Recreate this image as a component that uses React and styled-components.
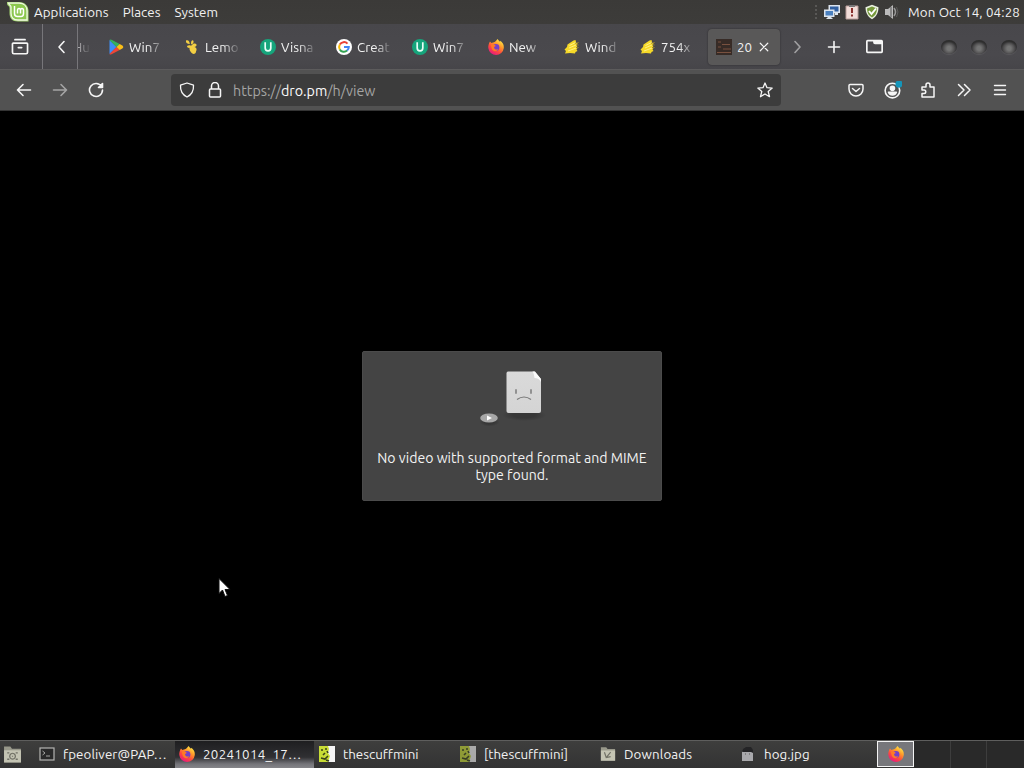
import styled, { createGlobalStyle, css } from "styled-components"

const GlobalStyle = createGlobalStyle`
  * {
    box-sizing: border-box;
  }
  body {
    margin: 0;
    overflow: hidden;
    background: #000;
    font-family: Ubuntu, "Noto Sans", "Open Sans", sans-serif;
    font-size: 13.333px;
    color: #f2f2f2;
  }
  svg {
    display: block;
    flex: none;
  }
`

const Desktop = styled.div`
  position: relative;
  width: 1024px;
  height: 768px;
  display: flex;
  flex-direction: column;
  background: #000;
`

const Text = styled.span`
  display: block;
  padding-top: 2px;
  white-space: nowrap;
  line-height: 18px;
  letter-spacing: ${(p) => p.$ls || 0}px;
`

/* top panel */
const Panel = styled.header`
  height: 24px;
  display: flex;
  align-items: center;
  padding: 0 4px 0 7px;
  background: linear-gradient(#3b3a38, #3d3c3a);
`
const Menu = styled.nav`
  display: flex;
  gap: 14px;
  margin-left: 5px;
  flex: 1;
`
const Tray = styled.div`
  display: flex;
  align-items: center;
  gap: 4px;
  margin-right: 8px;
`

/* tab strip */
const TabBar = styled.div`
  height: 45px;
  display: flex;
  align-items: center;
  background: linear-gradient(#48474b, #4a494d 70%, #464549);
`
const Cell = styled.div`
  width: ${(p) => p.$w}px;
  height: 100%;
  display: flex;
  align-items: center;
  justify-content: center;
  padding-left: ${(p) => p.$pad || 0}px;
  padding-right: ${(p) => p.$padR || 0}px;
  border-right: ${(p) => (p.$line ? "1px solid #77767a" : "none")};
  opacity: ${(p) => (p.$dim ? 0.5 : 1)};
`
const Clipped = styled.div`
  width: 22px;
  overflow: hidden;
  color: #b0afb3;
  text-indent: -5px;
  mask-image: linear-gradient(90deg, #000, transparent 60%);
`
const Tab = styled.div`
  width: 76px;
  height: 36px;
  display: flex;
  align-items: center;
  gap: 5px;
  padding-left: 8px;
  ${(p) =>
    p.$active &&
    css`
      width: 72px;
      background: #595858;
      border-radius: 4px;
      box-shadow: 0 0 2px rgba(0, 0, 0, 0.45);
    `}
`
const TabTitle = styled(Text)`
  width: ${(p) => p.$w || 36}px;
  overflow: hidden;
  mask-image: ${(p) =>
    p.$w ? "none" : "linear-gradient(90deg, #000 50%, transparent 100%)"};
`
const WindowButtons = styled.div`
  display: flex;
  gap: 14px;
  margin-left: auto;
  margin-right: 7px;
`
const Dot = styled.i`
  width: 16px;
  height: 14px;
  border-radius: 50%;
  background: radial-gradient(circle at 50% 60%, #747474 0 2px, #555455 5px, #403f41 7px);
  box-shadow: inset 0 2px 2px #2c2c2c, 0 1px 1px #5a595c;
`

/* navigation */
const NavBar = styled.div`
  height: 42px;
  display: flex;
  align-items: center;
  background: #525252;
  border-top: 1px solid #5c5b5c;
  border-bottom: 1px solid #343434;
`
const UrlBar = styled.div`
  width: 610px;
  height: 32px;
  margin-left: 51px;
  padding: 0 8px;
  display: flex;
  align-items: center;
  background: #3c3c3c;
  border-radius: 4px;
`
const Url = styled(Text)`
  flex: 1;
  margin-left: -2px;
  font-size: 14.300px;
  color: #a5a5a4;
  b {
    font-weight: 400;
    color: #fbfbfb;
  }
`

/* page */
const Page = styled.main`
  flex: 1;
  display: flex;
  align-items: center;
  justify-content: center;
`
const ErrorBox = styled.div`
  width: 300px;
  height: 150px;
  display: flex;
  flex-direction: column;
  align-items: center;
  background: #444;
  border: 1px solid #4b4b4b;
  border-radius: 2px;
`
const Message = styled.p`
  margin: 24px 0 0;
  width: 290px;
  text-align: center;
  font-size: 14.100px;
  line-height: 17px;
`

/* bottom panel */
const TaskBar = styled.footer`
  height: 28px;
  display: flex;
  background: linear-gradient(#3e3e3d, #333);
  border-top: 1px solid #5e5e5d;
`
const Task = styled.div`
  flex: none;
  width: ${(p) => p.$w}px;
  height: 100%;
  display: flex;
  align-items: center;
  gap: ${(p) => p.$gap || 8}px;
  padding-left: ${(p) => p.$pad || 4}px;
  padding-bottom: 1px;
  background: ${(p) =>
    p.$active ? "linear-gradient(#1e1e20, #303033 60%, #747479 85%, #858589)" : "none"};
  svg {
    opacity: ${(p) => (p.$dim ? 0.6 : 1)};
  }
`
const Workspace = styled.div`
  flex: 0 1 37px;
  height: 27px;
  display: flex;
  align-items: center;
  justify-content: center;
  background: #292929;
  border-right: 1px solid #3d3d3d;
  &:last-child {
    border-right: none;
  }
  ${(p) =>
    p.$active &&
    css`
      flex: none;
      width: 37px;
      background: #77777b;
      border: 1px solid #f4f4f4;
      height: 26px;
    `}
`
const Pointer = styled.svg`
  position: absolute;
  left: 218px;
  top: 578px;
`

const Line = ({ s = 16, d, w = 1.4, children }) => (
  <svg
    width={s}
    height={s}
    viewBox="0 0 16 16"
    fill="none"
    stroke="#f6f6f6"
    strokeWidth={w}
    strokeLinecap="round"
    strokeLinejoin="round"
  >
    {d && <path d={d} />}
    {children}
  </svg>
)

const Mint = () => (
  <svg width="22" height="22" viewBox="0 0 22 22">
    <path d="M0 1h12c6 0 9.500 4 9.500 9v10.500H11C5 20.500 2.500 17 2.500 12V7C2.500 5 .5 5 0 3z" fill="#a5d672" />
    <path d="M1.500 2.200h10.500c5 0 8 3.300 8 7.800v9H11c-4.500 0-7-2.200-7-7V6C4 4 2 4 1.500 2.200z" fill="#8cc84f" stroke="#eff8e2" strokeWidth="1.300" />
    <path d="M7.500 5v7.500q0 3 3 3H14q2.500 0 2.500-3V9.500q0-2-1.500-2t-1.500 2v3M13.500 9.500q0-2-1.500-2t-1.500 2v3" fill="none" stroke="#fff" strokeWidth="1.500" />
  </svg>
)

const Firefox = () => (
  <svg width="16" height="16" viewBox="0 0 16 16">
    <defs>
      <linearGradient id="fx" x1="0.850" y1="0.050" x2="0.250" y2="1">
        <stop offset="0" stopColor="#fff14a" />
        <stop offset="0.350" stopColor="#ff9a2a" />
        <stop offset="0.650" stopColor="#ff4a3d" />
        <stop offset="1" stopColor="#e31587" />
      </linearGradient>
    </defs>
    <path d="M9.500 0c1 1 1.500 2 2.500 2.700l.5-.9C15 4 16 6 15.800 9A7.800 7.800 0 0 1 .3 9C0 6.500 1 4 2 2.500L3.300 4 5 3.500C6 3.500 8 2.500 9.500 0z" fill="url(#fx)" />
    <circle cx="8" cy="8.500" r="3.400" fill="#7440c9" />
    <path d="M3 5.500c2-.8 3.500 0 4.800 1.400L6 8c0 3 4 3.500 5 1-3 6-8 3-8-3.500z" fill="#ff7a26" />
  </svg>
)

const Play = () => (
  <svg width="16" height="16" viewBox="0 0 16 16">
    <path d="M1.500 1v14l7-7z" fill="#3f8df5" />
    <path d="M1.500 1q.5-1 2-.3L11.700 5 8.500 8z" fill="#35b15c" />
    <path d="M1.500 15q.5 1 2 .3L11.700 11 8.500 8z" fill="#ee4638" />
    <path d="M8.500 8l3.200-3 3 1.700q1.300 1.300 0 2.600l-3 1.700z" fill="#fbbf18" />
  </svg>
)

const Lemon = () => (
  <svg width="16" height="16" viewBox="0 0 16 16" fill="#f3cf43">
    <path d="M2 1.500c2-1 3.600.5 3.800 3.500-2.800 0-4.300-1.500-3.800-3.500zM7 4.500C7 1 9 .5 9.500 2 10 4 8.500 5 7.500 5.500zM3 7c2-1.500 4-.8 5 .5-1.500 2-5 2-5-.5z" />
    <path d="M8 6c2-2.500 5-1.500 4.500.5-.5 1.500-2 1.500-3 1.500 2.500 0 4 2 2.500 4.500 0 1.500-1 2.500-2.500 2.500C6.500 14 4.500 10 6 7.500z" />
  </svg>
)

const GreenU = () => (
  <svg width="16" height="16" viewBox="0 0 16 16">
    <circle cx="8" cy="8" r="8" fill="#16a57c" />
    <path d="M5.200 3.200V9a2.800 2.800 0 0 0 5.600 0V3.200" fill="none" stroke="#e9fff8" strokeWidth="1.700" />
  </svg>
)

const Google = () => (
  <svg width="16" height="16" viewBox="0 0 16 16" fill="none" strokeWidth="2">
    <circle cx="8" cy="8" r="8" fill="#fff" />
    <path d="M11.500 4.600A4.800 4.800 0 0 0 3.800 5.600" stroke="#e94235" />
    <path d="M3.800 5.600a4.800 4.800 0 0 0 0 4.800" stroke="#fabb05" />
    <path d="M3.800 10.400a4.800 4.800 0 0 0 7.300 1.200" stroke="#34a353" />
    <path d="M11.100 11.600A4.800 4.800 0 0 0 12.800 8H8" stroke="#4285f4" />
  </svg>
)

const Scribble = () => (
  <svg width="16" height="16" viewBox="0 0 16 16">
    <path d="M3.500 5.500L9.500 1.500l2-.5.5 2-1 1.500 2.500-.5-.5 3 .5 2-1 1.500 1 1.500-2 1-.5 1.500-5-.5-5 .5L2 12 .5 10.500 3 8z" fill="#f6d928" />
    <path d="M5.500 6.500l6-3M5 9l7-3M4 12l8-3" stroke="#fff083" fill="none" />
    <path d="M12 3.500h3M12 6h3M12 8.500h3" stroke="#857539" strokeWidth=".8" />
  </svg>
)

const Thumb = () => (
  <svg width="16" height="16" viewBox="0 0 16 16">
    <path d="M0 0h16v16H0z" fill="#372b26" />
    <path d="M2 3h3M6 5.500h8M2 8h3M7 10h8M1 13.500h14" stroke="#79513f" strokeWidth="1.200" />
  </svg>
)

const Terminal = () => (
  <svg width="16" height="16" viewBox="0 0 16 16">
    <rect x="1" y="2" width="14" height="12" fill="#292929" stroke="#b5b5b2" strokeWidth="1.200" />
    <path d="M3.500 5l2.500 2-2.500 2M7 10h4" fill="none" stroke="#a5a5a2" />
  </svg>
)

const Folder = ({ s = 19, arrow }) => (
  <svg width={s} height={s} viewBox="0 0 18 18">
    <path d="M1 1.500h6l1.500 2H17v13H1z" fill="#98988a" />
    <path d="M1 5h16v11.500H1z" fill="#c4c4b3" />
    {arrow ? (
      <path d="M5 7l2 6 5-1M7 13l5-6" fill="none" stroke="#717166" strokeWidth="1.300" />
    ) : (
      <path d="M4 7.500h2M4 13.500h2M12 7.500h2M12 13.500h2M9 8a2.700 2.700 0 1 0 .1 0M9 10.200v1" fill="none" stroke="#717166" strokeWidth="1.200" />
    )}
  </svg>
)

const Scuff = () => (
  <svg width="16" height="16" viewBox="0 0 16 16">
    <path d="M0 0h16v16H0z" fill="#f5f5f5" />
    <path d="M0 0h9l1 3-1 4 2 3-2 6H0z" fill="#c8dc35" />
    <path d="M2 4h2M6 3h2M6 7l-2 2M2 12l4 1 3-3M8 5l1 2M7 14l3 1" stroke="#38401a" strokeWidth="1.600" fill="none" />
  </svg>
)

const Hog = () => (
  <svg width="16" height="16" viewBox="0 0 16 16">
    <path d="M2 5h11v10H2z" fill="#a9a9ac" />
    <path d="M2 6l1-3 3-2h5l2 3v3l-2-1H4z" fill="#242426" />
    <path d="M5 8h1M9 8h1" stroke="#555" />
  </svg>
)

const TrayIcons = () => (
  <Tray>
    <svg width="6" height="16" viewBox="0 0 6 16" fill="#595856">
      <path d="M1 1h2v2H1zM1 5h2v2H1zM1 9h2v2H1zM1 13h2v2H1z" />
    </svg>
    <svg width="16" height="16" viewBox="0 0 16 16">
      <path d="M4.500 1H16v8h-2v2h-3V9H4.500z" fill="#dce4ee" />
      <path d="M6 2.500h8.500v5H6z" fill="#315f9f" />
      <path d="M0 5.500h10.500V13H7l2 2H2l2-2H0z" fill="#dce4ee" />
      <path d="M1.500 7H9v4.500H1.500z" fill="#4a80bf" />
    </svg>
    <svg width="16" height="16" viewBox="0 0 16 16">
      <path d="M2 2h12v13H2z" fill="#f2ddd8" stroke="#b99d98" />
      <path d="M5 1h6v2H5z" fill="#777" />
      <path d="M8 4v5M8 10.500v2" stroke="#8a2f2a" strokeWidth="2" />
    </svg>
    <svg width="16" height="16" viewBox="0 0 16 16">
      <path d="M8 .8l6.500 2.500C14.500 9 12 13 8 15.300 4 13 1.500 9 1.500 3.300z" fill="#e9f0df" />
      <path d="M8 2.500l5 2C13 9 11 12 8 13.500 5 12 3 9 3 4.500z" fill="#75983a" />
      <path d="M5 7l2.500 3L12 4.500" stroke="#fff" strokeWidth="1.900" fill="none" />
    </svg>
    <svg width="16" height="16" viewBox="0 0 16 16">
      <path d="M1 5h3l5-4v14l-5-4H1z" fill="#bbb" />
      <path d="M7 3v10" stroke="#888" strokeWidth="2" />
      <path d="M10 4q3 4 0 8" stroke="#999" strokeWidth="1.500" fill="none" />
      <path d="M12.500 3q3 5 0 10" stroke="#5d5d5c" fill="none" />
    </svg>
  </Tray>
)

const tabs = [
  { icon: <Play />, title: "Win7" },
  { icon: <Lemon />, title: "Lemo" },
  { icon: <GreenU />, title: "Visna" },
  { icon: <Google />, title: "Creat" },
  { icon: <GreenU />, title: "Win7" },
  { icon: <Firefox />, title: "New" },
  { icon: <Scribble />, title: "Wind" },
  { icon: <Scribble />, title: "754x" },
]

const SadFile = () => (
  <svg width="84" height="74" viewBox="0 0 84 74">
    <defs>
      <linearGradient id="paper" x1="0" y1="0" x2="0" y2="1">
        <stop offset="0" stopColor="#dadada" />
        <stop offset="1" stopColor="#d4d4d4" />
      </linearGradient>
      <radialGradient id="shade">
        <stop offset="0.500" stopColor="#373737" />
        <stop offset="1" stopColor="#444" />
      </radialGradient>
    </defs>
    <ellipse cx="54" cy="63" rx="22" ry="6" fill="url(#shade)" />
    <path d="M38 19.500h26.500l6.500 7.500v32q0 2-2 2H38.500q-2 0-2-2V21.500q0-2 1.500-2z" fill="url(#paper)" />
    <path d="M62.500 19.500h2.500l6 7.500v3q-2-4-6.500-4 0-4-2-6.500z" fill="#fafafa" />
    <path d="M46 38v3M61 38v3" stroke="#8e8e8e" strokeWidth="1.900" strokeLinecap="round" />
    <path d="M47 47.500q7-5 14 0" fill="none" stroke="#777" strokeWidth="1.200" />
    <ellipse cx="19.500" cy="70" rx="10" ry="4.500" fill="url(#shade)" />
    <ellipse cx="19" cy="66" rx="8.800" ry="4.600" fill="#a7a7a7" />
    <path d="M17 63.500v5l5-2.500z" fill="#fff" />
  </svg>
)

function TopPanel() {
  return (
    <Panel>
      <Mint />
      <Menu>
        <Text $ls={0.08}>Applications</Text>
        <Text $ls={0.05}>Places</Text>
        <Text $ls={0.05}>System</Text>
      </Menu>
      <TrayIcons />
      <Text $ls={0.14}>Mon Oct 14, 04:28</Text>
    </Panel>
  )
}

function Tabs() {
  return (
    <TabBar>
      <Cell $w={43} $line $padR={2}>
        <Line s={18} w={1.500}>
          <path d="M3.500 1.500h9M2 4.500h12q.7 0 .7.700v7.500q0 1.300-1.300 1.300H2.600q-1.300 0-1.300-1.300V5.200q0-.7.700-.7zM6.500 8.500h3" />
        </Line>
      </Cell>
      <Cell $w={35} $line $pad={4}>
        <Line w={1.600} d="M10 2.500L5 8l5 5.500" />
      </Cell>
      <Clipped>
        <Text>Hu</Text>
      </Clipped>
      {tabs.map((t, i) => (
        <Tab key={i}>
          {t.icon}
          <TabTitle>{t.title}</TabTitle>
        </Tab>
      ))}
      <Tab $active>
        <Thumb />
        <TabTitle $w={16}>20</TabTitle>
        <Line s={12} w={1.600} d="M3 3l10 10M13 3L3 13" />
      </Tab>
      <Cell $w={36} $dim>
        <Line w={1.600} d="M5 2.500L10 8l-5 5.500" />
      </Cell>
      <Cell $w={36} $padR={1}>
        <Line w={1.600} d="M8 2.500v11M2.500 8h11" />
      </Cell>
      <Cell $w={44}>
        <Line s={17} w={1.600}>
          <path d="M1.500 2.500h13q.7 0 .7.700v9.600q0 .7-.7.700h-13q-.7 0-.7-.7V3.200q0-.7.700-.7z" />
          <path d="M7.500 3h7v2h-6q-1 0-1-1z" fill="#f6f6f6" />
        </Line>
      </Cell>
      <WindowButtons>
        <Dot />
        <Dot />
        <Dot />
      </WindowButtons>
    </TabBar>
  )
}

function Navigation() {
  return (
    <NavBar>
      <Cell $w={48}>
        <Line w={1.600} d="M14.500 8h-13M7 2.500L1.500 8 7 13.500" />
      </Cell>
      <Cell $w={24} $dim>
        <Line w={1.600} d="M1.500 8h13M9 2.500L14.500 8 9 13.500" />
      </Cell>
      <Cell $w={48}>
        <Line w={1.600} d="M13.500 4.500a6.500 6.500 0 1 0 1 3.500M14.500 1.500v4h-4z" />
      </Cell>
      <UrlBar>
        <Line w={1.300} d="M8 1l6.500 2.200C14.800 8.500 12 13 8 15 4 13 1.200 8.500 1.500 3.200z" />
        <Cell $w={40}>
          <Line w={1.500} d="M4.500 7V4a3.500 3.500 0 0 1 7 0v3M3.500 7h9q1 0 1 1v6q0 1-1 1h-9q-1 0-1-1V8q0-1 1-1z" />
        </Cell>
        <Url>
          https://<b>dro.pm</b>/h/view
        </Url>
        <Line w={1.300} d="M8 1l2 4.700 5.200.4-4 3.400 1.300 5.200L8 12l-4.500 2.700 1.300-5.200-4-3.400L6 5.700z" />
      </UrlBar>
      <Cell $w={57} />
      <Cell $w={36}>
        <Line w={1.500} d="M2 2.500h12q1 0 1 1V7A7 7 0 0 1 1 7V3.500q0-1 1-1zM4.500 6.500L8 9.500l3.500-3" />
      </Cell>
      <Cell $w={36} $pad={1}>
        <Line s={18} w={1.400}>
          <circle cx="7.500" cy="8.500" r="6.500" />
          <circle cx="7.500" cy="6.500" r="1.800" fill="#f6f6f6" />
          <path d="M4 10h7q-1 2.500-3.500 2.500T4 10z" fill="#f6f6f6" />
          <circle cx="13.300" cy="2.700" r="3.200" fill="#1495ba" stroke="none" />
        </Line>
      </Cell>
      <Cell $w={36}>
        <Line w={1.500} d="M2 5h4V3a2 2 0 0 1 4 0v2h4v10H2v-3.500h2a1.700 1.700 0 0 0 0-3.500H2z" />
      </Cell>
      <Cell $w={35}>
        <Line w={1.500} d="M2.500 2.500L8 8l-5.500 5.500M8.500 2.500L14 8l-5.500 5.500" />
      </Cell>
      <Cell $w={38}>
        <Line w={1.400} d="M2.500 3.500h11M2.500 8h11M2.500 12.500h11" />
      </Cell>
    </NavBar>
  )
}

function BottomPanel() {
  return (
    <TaskBar>
      <Task $w={35} $pad={3}>
        <Folder />
      </Task>
      <Task $w={140}>
        <Terminal />
        <Text $ls={0.1}>fpeoliver@PAP…</Text>
      </Task>
      <Task $w={139} $active>
        <Firefox />
        <Text $ls={0.3}>20241014_17…</Text>
      </Task>
      <Task $w={141} $pad={5}>
        <Scuff />
        <Text>thescuffmini</Text>
      </Task>
      <Task $w={141} $dim $pad={5}>
        <Scuff />
        <Text>[thescuffmini]</Text>
      </Task>
      <Task $w={140}>
        <Folder s={16} arrow />
        <Text $ls={0.15}>Downloads</Text>
      </Task>
      <Task $w={141}>
        <Hog />
        <Text $ls={0.1}>hog.jpg</Text>
      </Task>
      <Workspace $active>
        <Firefox />
      </Workspace>
      <Workspace />
      <Workspace />
      <Workspace />
    </TaskBar>
  )
}

export default function App() {
  return (
    <Desktop>
      <GlobalStyle />
      <TopPanel />
      <Tabs />
      <Navigation />
      <Page>
        <ErrorBox>
          <SadFile />
          <Message>
            No video with supported format and MIME
            <br />
            type found.
          </Message>
        </ErrorBox>
      </Page>
      <BottomPanel />
      <Pointer width="14" height="20" viewBox="0 0 14 20">
        <path d="M1 .5v15L4.500 12 7 18.500 9.500 17.500 7 11.500h5z" fill="#fff" stroke="#111" />
      </Pointer>
    </Desktop>
  )
}
